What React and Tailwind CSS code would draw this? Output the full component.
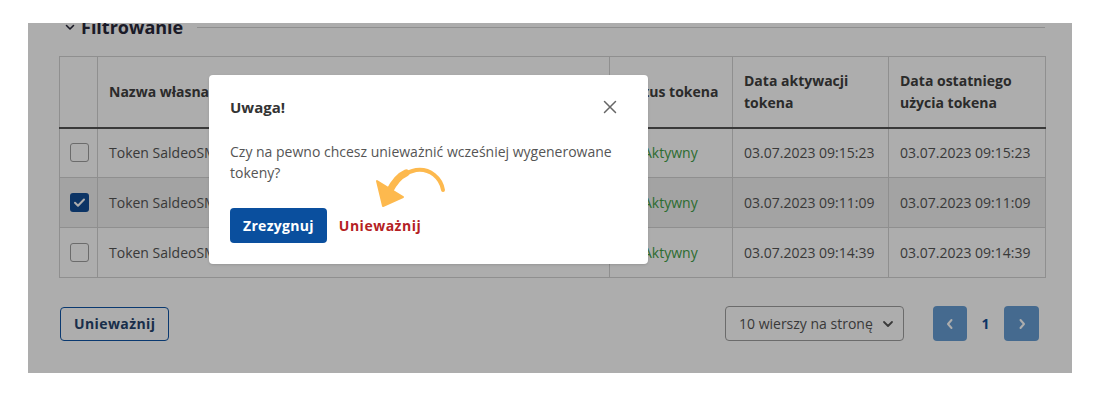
import React from 'react';

const rows = [
  { id: 1, name: 'Token SaldeoSMART', status: 'Aktywny', activated: '03.07.2023 09:15:23', used: '03.07.2023 09:15:23', checked: false },
  { id: 2, name: 'Token SaldeoSMART', status: 'Aktywny', activated: '03.07.2023 09:11:09', used: '03.07.2023 09:11:09', checked: true },
  { id: 3, name: 'Token SaldeoSMART', status: 'Aktywny', activated: '03.07.2023 09:14:39', used: '03.07.2023 09:14:39', checked: false },
];

function Checkbox({ checked }) {
  if (checked) {
    return (
      <span className="flex h-[19px] w-[19px] items-center justify-center rounded-[3px] bg-[#134d96]">
        <svg width="13" height="13" viewBox="0 0 13 13" fill="none">
          <path d="M2 6.8l3 3L11 3.5" stroke="white" strokeWidth="2" strokeLinecap="round" strokeLinejoin="round" />
        </svg>
      </span>
    );
  }
  return <span className="block h-[19px] w-[19px] rounded-[3px] border border-[#9e9e9e] bg-white" />;
}

export default function App() {
  return (
    <div className="relative h-[405px] w-[1117px] bg-white pt-[23px] pl-[28px] font-['Open_Sans',sans-serif]">
      <div className="relative h-[350px] w-[1044px] overflow-hidden bg-white pl-[31px] pr-[27px]">
        {/* filter heading */}
        <div className="-mt-[8px] flex h-6 items-center">
          <svg className="ml-[6px]" width="10" height="8" viewBox="0 0 10 8" fill="none">
            <path d="M1.5 2.5l3.5 3.5 3.5-3.5" stroke="#28283a" strokeWidth="1.6" strokeLinecap="round" strokeLinejoin="round" />
          </svg>
          <span className="ml-[6px] text-[18px] font-bold leading-6 text-[#28283a]">Filtrowanie</span>
          <div className="ml-[14px] mt-px h-px flex-1 bg-[#d3d3d3]" />
        </div>

        {/* tokens table */}
        <table className="mt-[17px] w-[986px] table-fixed border-collapse border border-[#d3d3d3] text-[14px] text-[#555]">
          <colgroup>
            <col className="w-[38px]" />
            <col className="w-[512px]" />
            <col className="w-[123px]" />
            <col className="w-[156px]" />
            <col className="w-[157px]" />
          </colgroup>
          <thead>
            <tr className="h-[71px] border-b-2 border-[#555]">
              <th className="border-r border-[#d3d3d3]" />
              <th className="border-r border-[#d3d3d3] px-[11px] text-left font-bold leading-[22px] text-[#404040]">Nazwa własna</th>
              <th className="border-r border-[#d3d3d3] px-[11px] text-left font-bold leading-[22px] text-[#404040]">Status tokena</th>
              <th className="border-r border-[#d3d3d3] px-[11px] text-left font-bold leading-[22px] text-[#404040]">Data aktywacji tokena</th>
              <th className="px-[11px] text-left font-bold leading-[22px] text-[#404040]">Data ostatniego użycia tokena</th>
            </tr>
          </thead>
          <tbody>
            {rows.map((row) => (
              <tr key={row.id} className={`h-[50px] border-b border-[#d3d3d3] ${row.checked ? 'bg-[#f0f0f0]' : 'bg-white'}`}>
                <td className="border-r border-[#d3d3d3]">
                  <div className="flex justify-center pl-px">
                    <Checkbox checked={row.checked} />
                  </div>
                </td>
                <td className="border-r border-[#d3d3d3] px-[11px]">{row.name}</td>
                <td className="border-r border-[#d3d3d3] px-[11px]">
                  <div className="flex items-center gap-[6px] text-[#43a047]">
                    <span className="block h-4 w-4 rounded-full bg-[#43a047]" />
                    {row.status}
                  </div>
                </td>
                <td className="border-r border-[#d3d3d3] px-[11px]">{row.activated}</td>
                <td className="px-[11px]">{row.used}</td>
              </tr>
            ))}
          </tbody>
        </table>

        {/* footer */}
        <div className="mt-[28px] flex items-center">
          <button className="ml-px h-[34px] rounded-[4px] border border-[#0f55a5] px-[13px] text-[14px] font-bold tracking-[0.4px] text-[#26446e]">
            Unieważnij
          </button>
          <div className="ml-auto flex h-[35px] w-[179px] items-center rounded-[4px] border border-[#9e9e9e] pl-[13px] pr-[9px] text-[14px] text-[#555]">
            <span>10 wierszy na stronę</span>
            <svg className="ml-auto" width="12" height="8" viewBox="0 0 12 8" fill="none">
              <path d="M2 2l4 4 4-4" stroke="#555" strokeWidth="1.8" strokeLinecap="round" strokeLinejoin="round" />
            </svg>
          </div>
          <div className="ml-[29px] mr-[6px] flex items-center">
            <button className="flex h-[35px] w-[34px] items-center justify-center rounded-[4px] bg-[#669dd3]">
              <svg width="8" height="12" viewBox="0 0 8 12" fill="none">
                <path d="M5.5 2L2 6l3.5 4" stroke="white" strokeWidth="2" strokeLinecap="round" strokeLinejoin="round" />
              </svg>
            </button>
            <span className="w-[37px] text-center text-[14px] font-bold text-[#134d96]">1</span>
            <button className="flex h-[35px] w-[35px] items-center justify-center rounded-[4px] bg-[#669dd3]">
              <svg width="8" height="12" viewBox="0 0 8 12" fill="none">
                <path d="M2.5 2L6 6l-3.5 4" stroke="white" strokeWidth="2" strokeLinecap="round" strokeLinejoin="round" />
              </svg>
            </button>
          </div>
        </div>

        {/* backdrop */}
        <div className="absolute inset-0 bg-black/[0.32]" />
      </div>

      {/* confirm dialog */}
      <div className="absolute left-[209px] top-[75px] w-[439px] rounded-[4px] bg-white p-[21px] shadow-sm">
        <div className="flex h-[22px] items-center justify-between">
          <span className="text-[15px] font-bold text-[#333]">Uwaga!</span>
          <svg className="mr-[10px]" width="14" height="14" viewBox="0 0 14 14" fill="none">
            <path d="M1.5 1.5l11 11M12.5 1.5l-11 11" stroke="#666" strokeWidth="1.5" strokeLinecap="round" />
          </svg>
        </div>
        <p className="mt-[23px] text-[14px] leading-[21px] text-[#555]">
          Czy na pewno chcesz unieważnić wcześniej wygenerowane tokeny?
        </p>
        <div className="mt-[25px] flex items-center">
          <button className="h-[35px] rounded-[4px] bg-[#0a4f9e] px-[13px] text-[14px] font-bold tracking-[0.3px] text-white">
            Zrezygnuj
          </button>
          <button className="ml-[12px] text-[14px] font-bold tracking-[0.5px] text-[#b51f24]">Unieważnij</button>
        </div>
        <svg className="absolute left-[153px] top-[85px]" width="100" height="60" viewBox="0 0 100 60" fill="none">
          <path d="M81 30 C 79 18, 68 8, 54 10 C 43 12, 35 19, 28 29" stroke="#fdb94e" strokeWidth="4" strokeLinecap="round" />
          <path d="M44 13 C 37 16, 32 22, 27 32" stroke="#fdb94e" strokeWidth="7" strokeLinecap="round" />
          <path d="M15 21 L21 46 L41 37 Z" fill="#fdb94e" strokeLinejoin="round" stroke="#fdb94e" strokeWidth="2" />
        </svg>
      </div>
    </div>
  );
}
